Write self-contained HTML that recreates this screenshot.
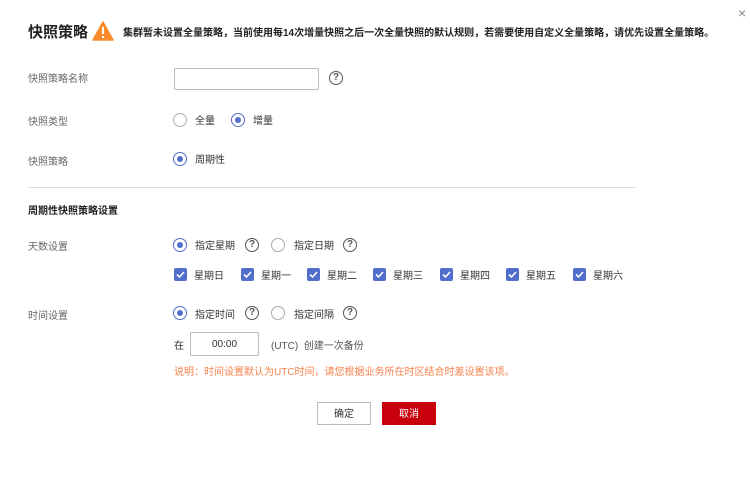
<!DOCTYPE html>
<html><head><meta charset="utf-8"><style>
*{margin:0;padding:0;box-sizing:border-box}
body{width:750px;height:480px;background:#fff;position:relative;font-family:"Liberation Sans","Noto Sans CJK SC",sans-serif;font-size:10px;color:#333;overflow:hidden}
.a{position:absolute;white-space:nowrap;line-height:22px}
.t{margin-top:2px}
.lbl{color:#666}
.radio{position:absolute;width:14px;height:14px;border:1px solid #aaa;border-radius:50%;background:#fff}
.radio.on{border-color:#526ecc}
.radio.on::after{content:"";position:absolute;left:3px;top:3px;width:6px;height:6px;border-radius:50%;background:#526ecc}
.q{position:absolute;width:14px;height:14px;border:1.3px solid #555;border-radius:50%;font-size:10px;line-height:12px;text-align:center;color:#555;font-weight:bold}
.cb{position:absolute;width:13px;height:13px;background:#526ecc;border-radius:2px}
.cb svg{position:absolute;left:0;top:0}
.btn{position:absolute;height:23px;width:54px;text-align:center;line-height:24px;font-size:10px;border:1px solid #bbb;background:#fff}
</style></head><body>
<div class="a" style="left:28px;top:23px;font-size:15px;font-weight:bold;line-height:20px;color:#222">快照策略</div>
<svg class="a" style="left:92px;top:21px" width="22" height="20" viewBox="0 0 22 20"><path d="M11 1 L21 19 L1 19 Z" fill="#f98b2b" stroke="#f98b2b" stroke-linejoin="round" stroke-width="1.5"/><rect x="10" y="6" width="2" height="7" fill="#fff"/><rect x="10" y="15" width="2" height="2" fill="#fff"/></svg>
<div class="a" style="left:123px;top:27px;font-weight:bold;font-size:10px;color:#222;line-height:14px">集群暂未设置全量策略，当前使用每14次增量快照之后一次全量快照的默认规则，若需要使用自定义全量策略，请优先设置全量策略。</div>
<div class="a" style="left:738px;top:4px;font-size:14px;color:#888;line-height:18px">×</div>

<div class="a t lbl" style="left:28px;top:67px">快照策略名称</div>
<div class="a" style="left:174px;top:68px;width:145px;height:22px;border:1px solid #bbb;border-radius:2px"></div>
<div class="q" style="left:329px;top:71px">?</div>

<div class="a t lbl" style="left:28px;top:110px">快照类型</div>
<div class="radio" style="left:173px;top:113px"></div><div class="a t" style="left:195px;top:109px">全量</div>
<div class="radio on" style="left:231px;top:113px"></div><div class="a t" style="left:253px;top:109px">增量</div>

<div class="a t lbl" style="left:28px;top:150px">快照策略</div>
<div class="radio on" style="left:173px;top:152px"></div><div class="a t" style="left:195px;top:148px">周期性</div>

<div class="a" style="left:28px;top:187px;width:608px;height:1px;background:#ddd"></div>
<div class="a t" style="left:28px;top:199px;font-weight:bold;color:#222">周期性快照策略设置</div>

<div class="a t lbl" style="left:28px;top:235px">天数设置</div>
<div class="radio on" style="left:173px;top:238px"></div><div class="a t" style="left:195px;top:234px">指定星期</div>
<div class="q" style="left:245px;top:238px">?</div>
<div class="radio" style="left:271px;top:238px"></div><div class="a t" style="left:294px;top:234px">指定日期</div>
<div class="q" style="left:343px;top:238px">?</div>

<div class="cb" style="left:174px;top:268px"><svg width="13" height="13"><path d="M3 6.5 L5.5 9 L10 4" stroke="#fff" stroke-width="1.6" fill="none"/></svg></div><div class="a t" style="left:194px;top:264px">星期日</div>
<div class="cb" style="left:241px;top:268px"><svg width="13" height="13"><path d="M3 6.5 L5.5 9 L10 4" stroke="#fff" stroke-width="1.6" fill="none"/></svg></div><div class="a t" style="left:261px;top:264px">星期一</div>
<div class="cb" style="left:307px;top:268px"><svg width="13" height="13"><path d="M3 6.5 L5.5 9 L10 4" stroke="#fff" stroke-width="1.6" fill="none"/></svg></div><div class="a t" style="left:327px;top:264px">星期二</div>
<div class="cb" style="left:373px;top:268px"><svg width="13" height="13"><path d="M3 6.5 L5.5 9 L10 4" stroke="#fff" stroke-width="1.6" fill="none"/></svg></div><div class="a t" style="left:393px;top:264px">星期三</div>
<div class="cb" style="left:440px;top:268px"><svg width="13" height="13"><path d="M3 6.5 L5.5 9 L10 4" stroke="#fff" stroke-width="1.6" fill="none"/></svg></div><div class="a t" style="left:460px;top:264px">星期四</div>
<div class="cb" style="left:506px;top:268px"><svg width="13" height="13"><path d="M3 6.5 L5.5 9 L10 4" stroke="#fff" stroke-width="1.6" fill="none"/></svg></div><div class="a t" style="left:526px;top:264px">星期五</div>
<div class="cb" style="left:573px;top:268px"><svg width="13" height="13"><path d="M3 6.5 L5.5 9 L10 4" stroke="#fff" stroke-width="1.6" fill="none"/></svg></div><div class="a t" style="left:593px;top:264px">星期六</div>

<div class="a t lbl" style="left:28px;top:304px">时间设置</div>
<div class="radio on" style="left:173px;top:306px"></div><div class="a t" style="left:195px;top:303px">指定时间</div>
<div class="q" style="left:245px;top:306px">?</div>
<div class="radio" style="left:271px;top:306px"></div><div class="a t" style="left:294px;top:303px">指定间隔</div>
<div class="q" style="left:343px;top:306px">?</div>

<div class="a t" style="left:174px;top:334px">在</div>
<div class="a" style="left:190px;top:332px;width:69px;height:24px;border:1px solid #bbb;border-radius:2px;text-align:center;line-height:24px">00:00</div>
<div class="a t" style="left:271px;top:334px;color:#555">(UTC)&nbsp;&nbsp;创建一次备份</div>
<div class="a t" style="left:174px;top:360px;color:#f6824d">说明：时间设置默认为UTC时间，请您根据业务所在时区结合时差设置该项。</div>

<div class="btn" style="left:317px;top:402px">确定</div>
<div class="btn" style="left:382px;top:402px;background:#c7000b;border-color:#c7000b;color:#fff">取消</div>
</body></html>
